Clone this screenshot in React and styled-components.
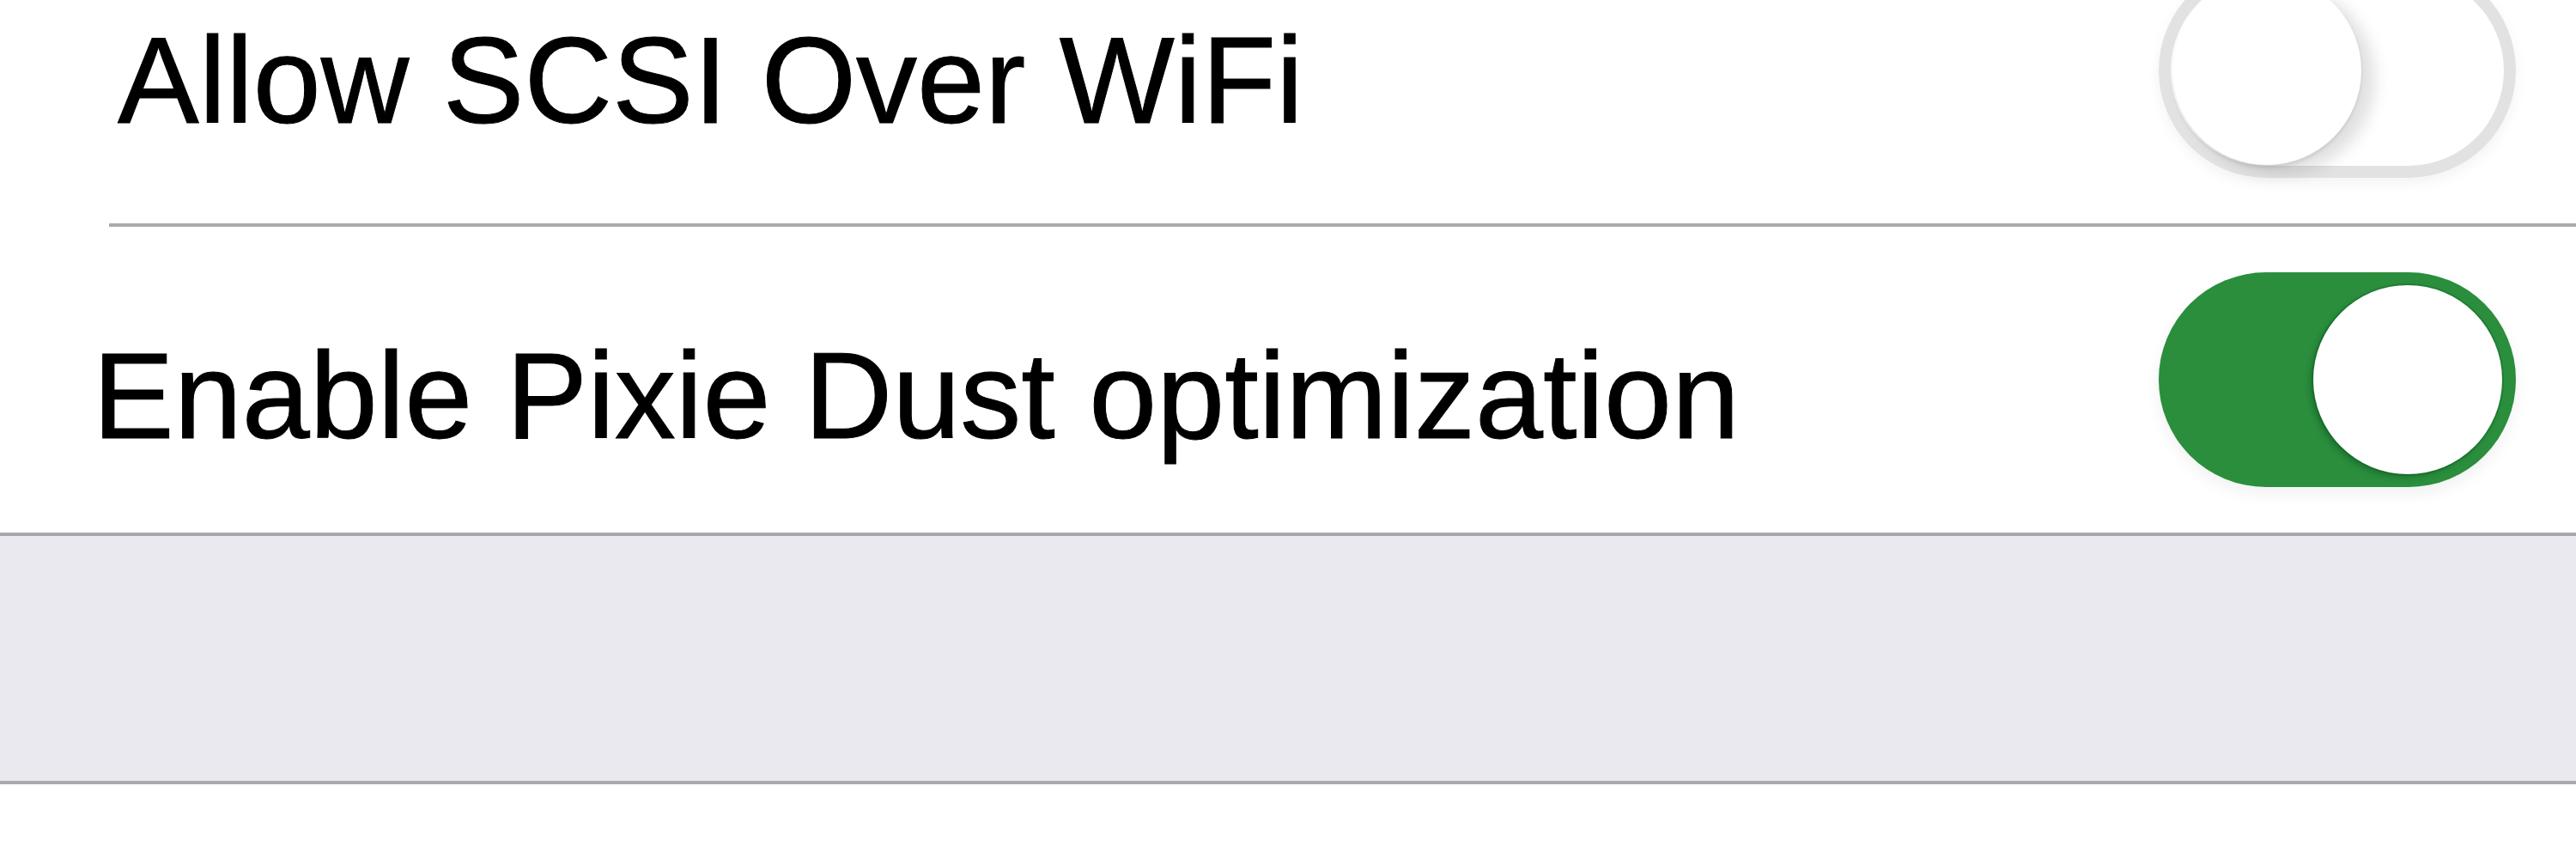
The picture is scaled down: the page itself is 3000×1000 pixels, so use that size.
import styled, { createGlobalStyle } from "styled-components"

const GlobalStyle = createGlobalStyle`
body{
    margin: 0;
    background: #ffffff;
    font-family: "Liberation Sans", Arial, Helvetica, sans-serif;
}
`

const settings = [
    { id: "scsi", label: "Allow SCSI Over WiFi", on: false, inset: 137, drop: 24 },
    { id: "pixie", label: "Enable Pixie Dust optimization", on: true, inset: 108, drop: 38 },
]

const App = () => {
    return(
        <Screen>
            <GlobalStyle />
            <Group>
                {settings.map((item, i) => (
                    <div key={item.id}>
                        <Row>
                            <Label $inset={item.inset} $drop={item.drop}>{item.label}</Label>
                            <Toggle $on={item.on} role="switch" aria-checked={item.on}>
                                <Knob $on={item.on} />
                            </Toggle>
                        </Row>
                        {i < settings.length - 1 && <Separator />}
                    </div>
                ))}
            </Group>
            <SectionGap />
        </Screen>
    )
}

export default App


const Screen = styled.div`
width: 3000px;
height: 1000px;
overflow: hidden;
background: #ffffff;
`
const Group = styled.div`
margin-top: -96px;
background: #ffffff;
border-bottom: 4px solid #a7a7ab;
`
const Row = styled.div`
height: 356px;
display: flex;
align-items: center;
justify-content: space-between;
padding-right: 70px;
`
const Label = styled.span`
padding-left: ${p => p.$inset}px;
padding-top: ${p => p.$drop}px;
font-size: 142px;
line-height: 1;
color: #000000;
white-space: nowrap;
-webkit-text-stroke: 1px #000000;
`
const Separator = styled.div`
margin-left: 127px;
height: 4px;
background: #ababaf;
`
const Toggle = styled.div`
box-sizing: border-box;
width: 416px;
height: 250px;
border-radius: 125px;
padding: 0 16px;
display: flex;
align-items: center;
justify-content: ${p => p.$on ? "flex-end" : "flex-start"};
background: ${p => p.$on ? "#2a8e3d" : "#ffffff"};
box-shadow: ${p => p.$on
    ? "0 8px 18px rgba(0, 0, 0, 0.06)"
    : "inset 0 0 0 14px #e2e2e2, 0 6px 16px rgba(0, 0, 0, 0.05)"};
`
const Knob = styled.div`
width: 220px;
height: 220px;
border-radius: 50%;
background: #ffffff;
box-shadow: ${p => p.$on
    ? "-4px 4px 6px rgba(0, 60, 20, 0.3), 0 0 0 2px rgba(0, 70, 20, 0.2)"
    : "16px 10px 18px rgba(0, 0, 0, 0.12), 0 3px 4px rgba(0, 0, 0, 0.1)"};
`
const SectionGap = styled.div`
height: 285px;
background: #e9e9ef;
border-bottom: 4px solid #a9a9ad;
`
